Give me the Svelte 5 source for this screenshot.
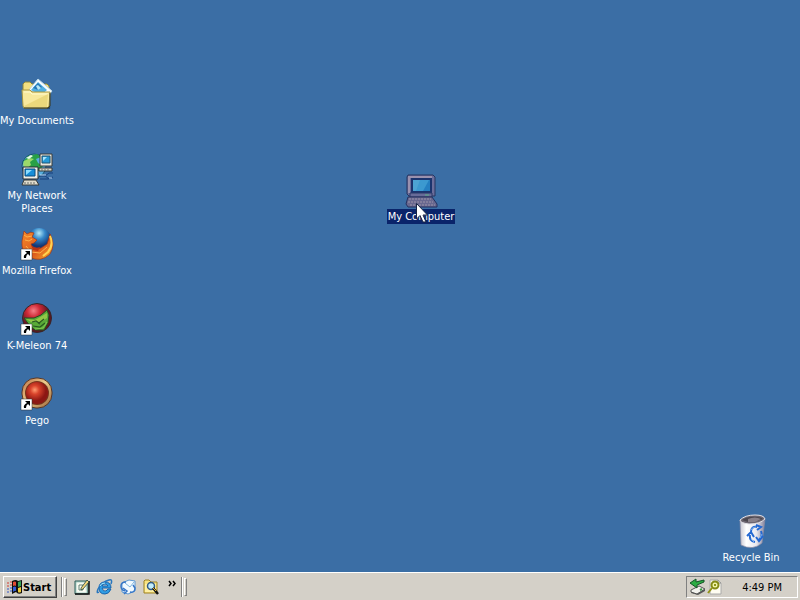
<script>
    let selected = $state("computer");

    const shortcuts = [
        { id: "documents", label: "My Documents" },
        { id: "network", label: "My Network Places" },
        { id: "firefox", label: "Mozilla Firefox", linked: true },
        { id: "kmeleon", label: "K-Meleon 74", linked: true },
        { id: "pego", label: "Pego", linked: true },
    ];

    const launchers = [
        { id: "desktop", label: "Show Desktop" },
        { id: "explorer", label: "Internet Explorer" },
        { id: "outlook", label: "Outlook Express" },
        { id: "search", label: "Search" },
    ];
</script>

{#snippet art(id)}
    {#if id == "documents"}
        <path d="M5 31H29L31 14 29 29Z" fill="#17314f" opacity=".6" />
        <path d="M2 11V6L4 4H9L11 6H26L28 8V14H2Z" fill="#f3df80" stroke="#8e853c" />
        <path d="M8 12L17 1 31 13 27 18Z" fill="#f8fdff" stroke="#bad8ea" />
        <path d="M10 12L17 4 26 12 20 17Z" fill="#52afe1" />
        <path d="M12 10L17 5 21 9 17 12Z" fill="#2377b9" />
        <path d="M15 8L17 7 20 10 17 12Z" fill="#b6e5f4" />
        <path d="M1 12H9L11 14H29L28 28 26 30H3L2 28Z" fill="#f8e99d" stroke="#a99742" />
        <path d="M3 14H9L11 16H27" fill="none" stroke="#fffbd0" />
        <path d="M3 28L27 16 26 29H4Z" fill="#ddc75b" opacity=".5" />
        <path d="M3 30H27L29 28V15" fill="none" stroke="#3d3c24" />
    {:else if id == "network"}
        <circle cx="13" cy="13" r="12" fill="#58aee0" stroke="#17536a" />
        <path d="M2 9L7 3 16 1 20 4 15 6 17 10 22 13 18 18 12 16 11 20 6 17 8 12Z" fill="#28a047" />
        <path d="M3 8L9 5 13 6 9 9 10 12 5 16 2 12Z" fill="#9bd96a" />
        <path d="M5 5L10 2 12 3 8 6Z" fill="#e7fbed" />
        <path d="M19 1H31V13H19Z" fill="#e8e6dc" stroke="#383c3d" />
        <path d="M21 3H29V10H21Z" fill="#249ad8" stroke="#1c5372" />
        <path d="M22 4H26L22 8Z" fill="#a9e5ff" />
        <path d="M18 15H31V18H18Z" fill="#ded9ca" stroke="#34383a" />
        <path d="M2 14H17V26H2Z" fill="#efeee6" stroke="#232d35" />
        <path d="M4 16H14V23H4Z" fill="#168ed8" stroke="#064c82" />
        <path d="M5 17H11L5 22Z" fill="#8bdcff" />
        <path d="M3 27H15L18 32H1Z" fill="#e0dccd" stroke="#363a38" />
        <path d="M3 30H15M20 17H28" stroke="#6b6e68" stroke-dasharray="2 1" />
        <path d="M18 23H24L28 20H32M19 26H27L32 24M23 22L28 26" fill="none" stroke="#173f7d" />
        <path d="M19 22H25M28 25H31" stroke="#b8d6f3" />
    {:else if id == "firefox"}
        <defs>
            <radialGradient id="sky" cx="50%" cy="20%">
                <stop offset="0" stop-color="#b4e8f6" />
                <stop offset=".45" stop-color="#3689ca" />
                <stop offset="1" stop-color="#123775" />
            </radialGradient>
            <linearGradient id="fur" x2="1" y2="1">
                <stop stop-color="#f58b2a" />
                <stop offset=".6" stop-color="#dd5a1c" />
                <stop offset="1" stop-color="#f6b52e" />
            </linearGradient>
        </defs>
        <circle cx="18" cy="13" r="13" fill="url(#sky)" />
        <path d="M3 3L6 6Q10 3 13 5L11 9 16 12 13 15 10 16Q12 22 20 20L26 16 28 10 29 6Q35 17 29 26 20 35 8 29 0 24 1 13Z" fill="url(#fur)" stroke="#9e3519" stroke-width=".7" />
        <path d="M3 7L6 9 11 8M4 12L8 13 11 11M5 18L10 24 19 25 26 19" fill="none" stroke="#ffb14a" />
        <path d="M10 17Q14 21 19 19L17 23 12 22Z" fill="#b83314" />
        <path d="M29 8Q33 17 27 24L22 28" fill="none" stroke="#ffd351" stroke-width="2" />
    {:else if id == "kmeleon"}
        <defs>
            <radialGradient id="scale" cx="38%" cy="25%">
                <stop stop-color="#f48088" />
                <stop offset=".45" stop-color="#cf2936" />
                <stop offset="1" stop-color="#621521" />
            </radialGradient>
        </defs>
        <circle cx="16" cy="15" r="14.5" fill="url(#scale)" stroke="#34282a" />
        <path d="M3 15L13 15 20 12 26 7 28 12 27 20 23 27 14 27 9 23Z" fill="#59aa38" stroke="#244b20" />
        <path d="M5 16L14 17 21 13 26 10 26 15 20 19 10 19Z" fill="#92c747" />
        <path d="M11 19L15 18 18 20 23 16M12 23L19 24 24 20M17 20L19 21" fill="none" stroke="#275a20" stroke-width="1.2" />
        <path d="M14 26L22 25 26 19" fill="none" stroke="#80c94d" />
    {:else if id == "pego"}
        <defs>
            <radialGradient id="ruby" cx="40%" cy="36%">
                <stop stop-color="#ff9b70" />
                <stop offset=".4" stop-color="#d9432b" />
                <stop offset="1" stop-color="#8c1713" />
            </radialGradient>
            <linearGradient id="rim" x2="1" y2="1">
                <stop stop-color="#b96a3e" />
                <stop offset=".45" stop-color="#edcc8c" />
                <stop offset="1" stop-color="#986036" />
            </linearGradient>
        </defs>
        <rect x="1" y="0" width="30" height="30" rx="14" fill="url(#rim)" stroke="#573727" />
        <circle cx="16" cy="15" r="12" fill="#76351c" />
        <circle cx="16" cy="15" r="11" fill="url(#ruby)" />
    {:else if id == "computer"}
        <path d="M3 1H28L30 3V22H4L2 20V3Z" fill="#6b6d9b" stroke="#26345f" />
        <path d="M3 2H27V4H5V19H3Z" fill="#9a91ae" />
        <path d="M7 5H26V18H7Z" fill="#257fc1" stroke="#1b346e" stroke-width="2" />
        <path d="M8 6H24L18 17H8Z" fill="#3c99d0" />
        <path d="M8 6H15L11 17H8Z" fill="#5dafd8" opacity=".5" />
        <path d="M5 19H27V23H5Z" fill="#686c98" stroke="#2b3969" />
        <path d="M3 23H27L32 30V33H3L1 30Z" fill="#69688f" stroke="#26315f" />
        <path d="M4 25H26M3 28H28M5 31H30" stroke="#9d94a8" stroke-dasharray="2 1" />
        <path d="M20 21H24" stroke="#5aae86" />
    {:else}
        <defs>
            <linearGradient id="bin">
                <stop stop-color="#c6c5d0" />
                <stop offset=".25" stop-color="#fff" />
                <stop offset=".65" stop-color="#e9e9f0" />
                <stop offset="1" stop-color="#85839c" />
            </linearGradient>
        </defs>
        <path d="M5 5L30 4 27 28Q18 36 6 30Z" fill="url(#bin)" stroke="#8d8ca5" stroke-width=".7" />
        <path d="M5 5Q10 0 20 0 29 0 30 4 25 9 14 9 5 8 5 5Z" fill="#6c6671" stroke="#e3e2e9" />
        <path d="M7 5Q13 1 22 2 26 2 28 4 21 7 13 7Z" fill="#4b474f" />
        <path d="M13 4Q20 1 26 4L20 7 13 7Z" fill="#89818a" />
        <path d="M16 17Q16 11 22 12M21 10L26 12 22 15M26 16Q28 22 24 25M28 21L24 26 21 22M20 27Q14 26 15 20M12 21L16 17 19 22" fill="none" stroke="#2368d2" stroke-width="2" />
        <path d="M16 15Q17 12 21 12M16 24L19 27M25 23L27 19" fill="none" stroke="#77aef0" />
    {/if}
{/snippet}

{#snippet desktopItem(item)}
    <button class="item" onclick={() => (selected = item.id)}>
        <span class="picture">
            <svg class="large" viewBox="0 0 32 32" aria-hidden="true">
                {@render art(item.id)}
            </svg>
            {#if item.linked}
                <svg class="link" viewBox="0 0 11 11" aria-hidden="true">
                    <path d="M0 0H11V11H0Z" fill="#fff" stroke="#333" stroke-width=".5" />
                    <path d="M4 2H9V7L7 5Q5 6 5 9H3Q2 6 6 4Z" fill="#000" />
                </svg>
            {/if}
        </span>
        <span class="label" class:selected={selected == item.id}>{item.label}</span>
    </button>
{/snippet}

<main>
    <section class="desktop" aria-label="Desktop">
        <div class="shortcuts">
            {#each shortcuts as item}
                {@render desktopItem(item)}
            {/each}
        </div>
        <div class="computer">
            {@render desktopItem({ id: "computer", label: "My Computer" })}
            <svg class="cursor" viewBox="0 0 12 20" aria-hidden="true">
                <path d="M.5 .5V16L4 12.5 7 19H10L7 12H11.5Z" fill="#fff" stroke="#182543" />
            </svg>
        </div>
        <div class="recycle">
            {@render desktopItem({ id: "recycle", label: "Recycle Bin" })}
        </div>
    </section>

    <footer>
        <button class="start">
            <svg class="flag" viewBox="0 0 17 16" aria-hidden="true">
                <path d="M1 4H3M4 3H6M1 7H3M4 6H6" stroke="#d33c35" />
                <path d="M1 10H3M4 9H6M1 13H3M4 12H6" stroke="#3558c8" />
                <path d="M6 2Q10 0 12 2L16 1V14Q12 16 10 13L6 15Z" fill="#111" />
                <path d="M7 3Q9 2 10 3V7Q9 6 7 7Z" fill="#e34a35" />
                <path d="M12 3L15 2V7L12 8Z" fill="#36a45a" />
                <path d="M7 8Q9 7 10 8V12Q9 11 7 13Z" fill="#315bd7" />
                <path d="M12 9L15 8V13Q13 14 12 13Z" fill="#efcb3c" />
            </svg>
            Start
        </button>
        <span class="divider"></span>
        <span class="grip"></span>
        <nav aria-label="Quick Launch">
            {#each launchers as item}
                <button class="launcher" aria-label={item.label}>
                    <svg viewBox="0 0 16 16" aria-hidden="true">
                        {#if item.id == "desktop"}
                            <path d="M1 2H14V15H1Z" fill="#b5d6ca" stroke="#2c5d58" />
                            <path d="M1 15H15V2" fill="none" stroke="#111" stroke-width="1.5" />
                            <path d="M3 4H11L12 13H3Z" fill="#fffef1" stroke="#eef5f0" />
                            <path d="M5 6H9V11H5Z" fill="none" stroke="#5b7f76" />
                            <path d="M7 9L13 1 15 3 9 10 7 11Z" fill="#f4d57a" stroke="#23463d" stroke-width=".8" />
                        {:else if item.id == "explorer"}
                            <path d="M14 9H5Q6 13 9 12L11 10H14Q12 15 8 15 2 15 2 9 2 3 8 3 14 3 14 9ZM5 7H11Q10 5 8 5 6 5 5 7Z" fill="#319ee4" stroke="#1663ad" />
                            <path d="M2 13Q-1 15 1 10 5 3 12 1 16 0 14 5" fill="none" stroke="#2877bf" stroke-width="1.5" />
                            <path d="M3 7Q4 4 8 4" fill="none" stroke="#a5e7fa" />
                        {:else if item.id == "outlook"}
                            <path d="M2 4L9 1 15 2V12L8 15 2 13Z" fill="#f1f9ff" stroke="#5c98d3" />
                            <path d="M5 4L10 8 14 3" fill="none" stroke="#82b6dc" />
                            <path d="M6 3Q1 3 1 7T5 12M3 9L7 12 4 15M10 13Q15 14 15 9L13 6" fill="none" stroke="#3777c8" stroke-width="1.5" />
                        {:else}
                            <path d="M1 4V2L2 1H6L8 3H14V14H1Z" fill="#f9e482" stroke="#9e8224" />
                            <path d="M2 5H13V13H2Z" fill="#fff0a3" />
                            <circle cx="8" cy="7" r="3.5" fill="#c2edfb" stroke="#315a86" stroke-width="1.5" />
                            <path d="M10 9L15 15" stroke="#111" stroke-width="2.5" />
                            <path d="M10 9L13 12" stroke="#e9b52d" />
                        {/if}
                    </svg>
                </button>
            {/each}
        </nav>
        <button class="more" aria-label="More toolbar items">
            <svg viewBox="0 0 8 5" aria-hidden="true">
                <path d="M0 0L2 2.5 0 5M4 0L6 2.5 4 5" fill="none" stroke="#000" stroke-width="1.5" />
            </svg>
        </button>
        <span class="divider"></span>
        <span class="grip"></span>
        <div class="tray">
            <svg class="hardware" viewBox="0 0 17 16" aria-hidden="true">
                <path d="M2 11L10 7 16 10 8 15 2 13Z" fill="#f1f1ed" stroke="#555" />
                <path d="M2 13L8 15 16 10V12L9 16 2 14Z" fill="#555" />
                <path d="M1 4L7 0V3L15 1V3L8 6V9Z" fill="#2bac43" stroke="#145427" />
                <path d="M11 11L13 10" stroke="#3c9b45" stroke-width="2" />
            </svg>
            <svg class="updates" viewBox="0 0 15 16" aria-hidden="true">
                <path d="M3 1H11L14 4V15H3Z" fill="#fffdf1" stroke="#aaa" />
                <path d="M11 1V4H14" fill="none" stroke="#888" />
                <circle cx="8" cy="6" r="3.5" fill="#f0f5a8" stroke="#858b16" stroke-width="2" />
                <path d="M5 9L1 14M7 6H9" fill="none" stroke="#929417" stroke-width="2" />
            </svg>
            <time>4:49 PM</time>
        </div>
    </footer>
</main>

<style>
    :global(body) {
        margin: 0;
    }

    main {
        min-height: 100vh;
        display: flex;
        flex-direction: column;
        background: #3b6ea5;
        color: #fff;
        font: 11px/13px "DejaVu Sans Condensed", "Noto Sans", sans-serif;
    }

    button {
        font: inherit;
        color: inherit;
        padding: 0;
        border: none;
        background: none;
    }

    svg {
        display: block;
        overflow: visible;
    }

    .desktop {
        flex: 1;
        position: relative;
    }

    .shortcuts {
        display: grid;
        grid-auto-rows: 75px;
        justify-content: center;
        width: 74px;
        padding-top: 78px;
    }

    .item {
        width: 80px;
        display: flex;
        flex-direction: column;
        align-items: center;
        justify-content: flex-start;
        gap: 3px;
    }

    .picture {
        position: relative;
    }

    .large {
        width: 32px;
        height: 32px;
    }

    .link {
        position: absolute;
        left: 0;
        bottom: 0;
        width: 11px;
        height: 11px;
    }

    .label {
        padding: 1px;
    }

    .selected {
        background: #0a246a;
    }

    /* icons that were dragged away from the grid */
    .computer {
        position: absolute;
        left: 381px;
        top: 174px;
    }

    .cursor {
        position: absolute;
        left: 35px;
        top: 29px;
        width: 12px;
        height: 20px;
    }

    .recycle {
        position: absolute;
        right: 9px;
        bottom: 7px;
    }

    footer {
        height: 24px;
        display: flex;
        align-items: center;
        padding: 2px 2px 1px 3px;
        border-top: 1px solid #fff;
        background: #d4d0c8;
        color: #000;
    }

    .start {
        width: 54px;
        height: 22px;
        display: flex;
        align-items: center;
        padding-left: 2px;
        border: 1px solid;
        border-color: #fff #404040 #404040 #fff;
        box-shadow: inset -1px -1px #808080;
        font-weight: bold;
    }

    .flag {
        width: 17px;
        height: 16px;
    }

    .divider {
        width: 1px;
        height: 20px;
        margin-left: 4px;
        background: #808080;
        border-right: 1px solid #fff;
    }

    .grip {
        width: 1px;
        height: 16px;
        margin-left: 1px;
        border: 1px solid;
        border-color: #fff #808080 #808080 #fff;
    }

    nav {
        display: flex;
        gap: 7px;
        margin-left: 7px;
    }

    .launcher svg {
        width: 16px;
        height: 16px;
    }

    .more {
        align-self: flex-start;
        padding: 6px 0;
        margin-left: 10px;
    }

    .more svg {
        width: 8px;
        height: 5px;
    }

    .tray {
        height: 20px;
        display: flex;
        align-items: center;
        margin-left: auto;
        padding: 0 15px 0 2px;
        border: 1px solid;
        border-color: #808080 #fff #fff #808080;
    }

    .hardware {
        width: 17px;
        height: 16px;
    }

    .updates {
        width: 15px;
        height: 16px;
        margin-left: 1px;
    }

    time {
        margin-left: 20px;
    }
</style>
